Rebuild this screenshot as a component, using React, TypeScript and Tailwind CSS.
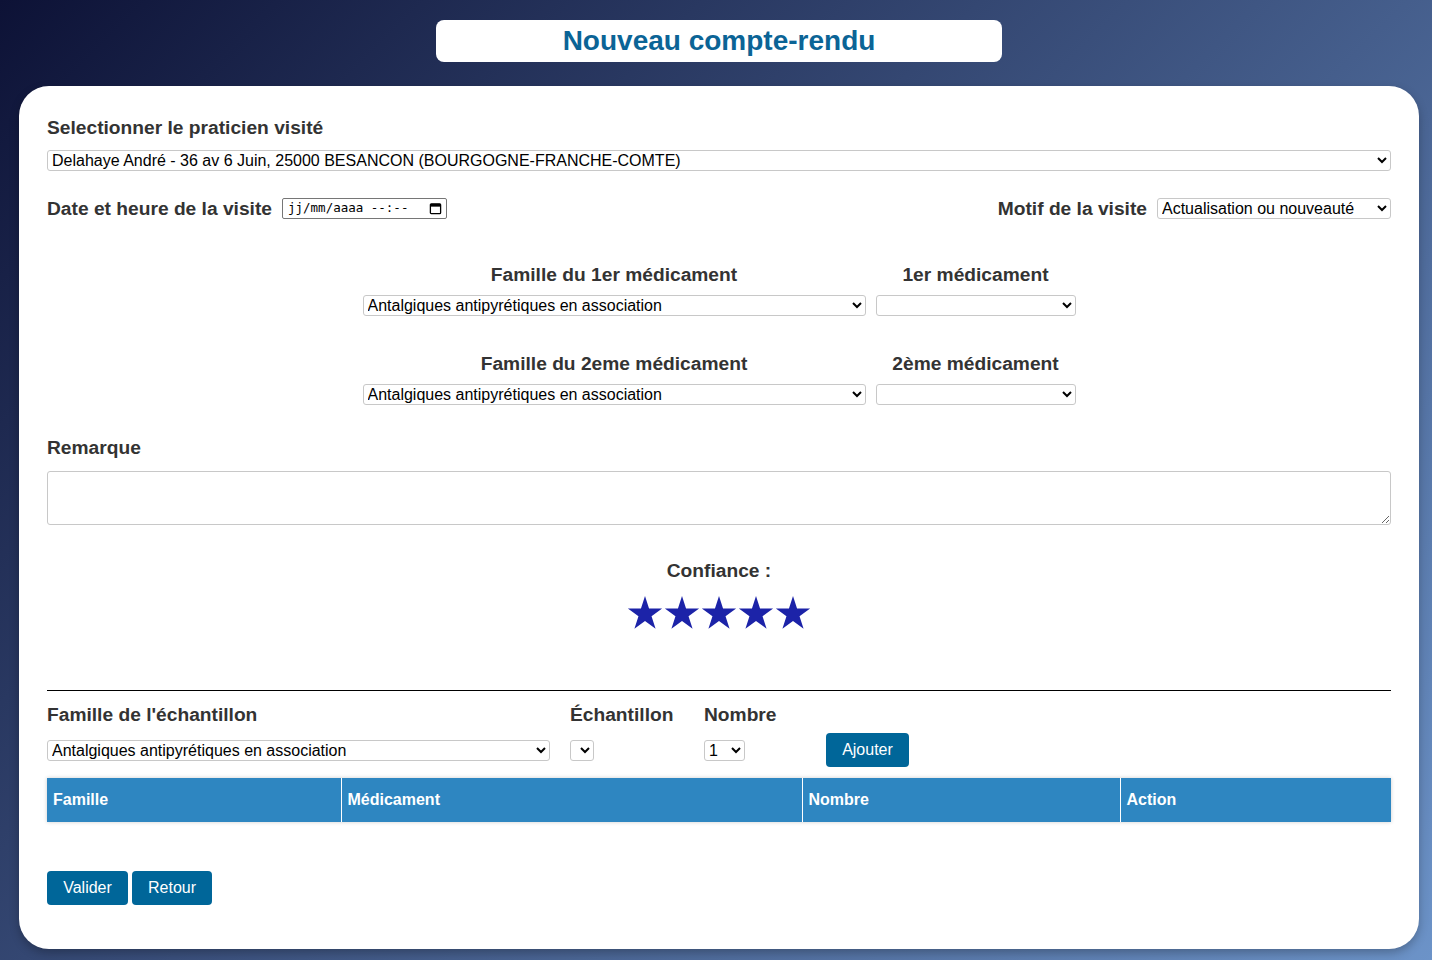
import React from "react";

const STAR = "50,0 61.23,34.55 97.55,34.55 68.16,55.9 79.39,90.45 50,69.1 20.61,90.45 31.84,55.9 2.45,34.55 38.77,34.55";

function Star() {
  return (
    <svg viewBox="0 0 100 91" className="w-[36px] h-[33px]">
      <polygon points={STAR} fill="#1c23a8" />
    </svg>
  );
}

const selCls =
  "block h-[21px] border border-[#c8c8c8] rounded-[3px] bg-white text-[16px] text-black pl-0 pr-[1px] outline-none";

const labelCls = "text-[19.2px] leading-[22px] font-bold text-[#333]";

export default function App() {
  return (
    <div
      className="min-h-screen w-full bg-[linear-gradient(135deg,#0d1236_0%,#6c93c8_100%)] pt-[20px] pb-[11px]"
      style={{ fontFamily: '"Liberation Sans", Arial, sans-serif' }}
    >
      <div className="ml-[19px] w-[1400px]">
        <div className="mx-auto w-[566px] h-[42px] bg-white rounded-[8px] flex items-center justify-center">
          <h1 className="text-[28px] font-bold text-[#0b6496] leading-none">Nouveau compte-rendu</h1>
        </div>

        <div className="mt-[24px] bg-white rounded-[30px] shadow-[0_4px_10px_rgba(0,0,0,0.25)] px-[28px] pt-[31px] pb-[44px]">
          <div className={labelCls}>Selectionner le praticien visité</div>
          <select className={selCls + " w-full mt-[11px]"} defaultValue="a">
            <option value="a">Delahaye André - 36 av 6 Juin, 25000 BESANCON (BOURGOGNE-FRANCHE-COMTE)</option>
          </select>

          <div className="mt-[27px] flex items-center justify-between h-[21px]">
            <div className="flex items-center gap-[10px]">
              <span className={labelCls}>Date et heure de la visite</span>
              <div className="w-[165px] h-[21px] border border-[#767676] rounded-[2px] flex items-center pl-[5px] pr-[4px] justify-between">
                <span className="text-[12.5px] text-black" style={{ fontFamily: '"DejaVu Sans Mono", "Liberation Mono", monospace' }}>
                  jj/mm/aaaa --:--
                </span>
                <svg viewBox="0 0 14 14" className="w-[13px] h-[13px]">
                  <rect x="1.5" y="2" width="11" height="10.5" rx="1" fill="none" stroke="#000" strokeWidth="1.4" />
                  <rect x="1.5" y="2" width="11" height="3" fill="#000" />
                </svg>
              </div>
            </div>
            <div className="flex items-center gap-[10px]">
              <span className={labelCls}>Motif de la visite</span>
              <select className={selCls + " w-[234px]"} defaultValue="a">
                <option value="a">Actualisation ou nouveauté</option>
              </select>
            </div>
          </div>

          <div className="mt-[45px] grid grid-cols-[503px_200px] justify-center gap-x-[10px] gap-y-[9px]">
            <div className={labelCls + " text-center"}>Famille du 1er médicament</div>
            <div className={labelCls + " text-center"}>1er médicament</div>
            <select className={selCls + " w-full"} defaultValue="a">
              <option value="a">Antalgiques antipyrétiques en association</option>
            </select>
            <select className={selCls + " w-full"} defaultValue="">
              <option value=""></option>
            </select>
          </div>

          <div className="mt-[37px] grid grid-cols-[503px_200px] justify-center gap-x-[10px] gap-y-[9px]">
            <div className={labelCls + " text-center"}>Famille du 2eme médicament</div>
            <div className={labelCls + " text-center"}>2ème médicament</div>
            <select className={selCls + " w-full"} defaultValue="a">
              <option value="a">Antalgiques antipyrétiques en association</option>
            </select>
            <select className={selCls + " w-full"} defaultValue="">
              <option value=""></option>
            </select>
          </div>

          <div className={labelCls + " mt-[32px]"}>Remarque</div>
          <textarea className="block mt-[12px] w-full h-[54px] border border-[#c8c8c8] rounded-[3px] bg-white outline-none" />

          <div className={labelCls + " mt-[35px] text-center"}>Confiance :</div>
          <div className="mt-[14px] flex justify-center gap-[1px]">
            <Star />
            <Star />
            <Star />
            <Star />
            <Star />
          </div>

          <div className="mt-[61px] h-px bg-black" />

          <div className="mt-[13px] grid grid-cols-[503px_114px_102px_auto] gap-x-[20px] gap-y-[7px] items-center">
            <div className={labelCls}>Famille de l'échantillon</div>
            <div className={labelCls}>Échantillon</div>
            <div className={labelCls}>Nombre</div>
            <div />
            <select className={selCls + " w-full"} defaultValue="a">
              <option value="a">Antalgiques antipyrétiques en association</option>
            </select>
            <div>
              <select className={selCls + " w-[24px]"} defaultValue="">
                <option value=""></option>
              </select>
            </div>
            <div>
              <select className={selCls + " w-[41px]"} defaultValue="1">
                <option value="1">1</option>
              </select>
            </div>
            <div>
              <button className="block h-[34px] w-[83px] bg-[#006699] text-white text-[16px] rounded-[4px]">Ajouter</button>
            </div>
          </div>

          <table className="mt-[11px] w-full border-collapse shadow-[0_0_4px_rgba(0,0,0,0.2)] table-fixed">
            <thead>
              <tr className="bg-[#2e86c1] text-white h-[44px]">
                <th className="w-[294px] text-left font-bold text-[16px] pl-[6px] border-r border-white">Famille</th>
                <th className="w-[461px] text-left font-bold text-[16px] pl-[6px] border-r border-white">Médicament</th>
                <th className="w-[318px] text-left font-bold text-[16px] pl-[6px] border-r border-white">Nombre</th>
                <th className="text-left font-bold text-[16px] pl-[6px]">Action</th>
              </tr>
            </thead>
          </table>

          <div className="mt-[49px] flex gap-[4px]">
            <button className="h-[34px] w-[81px] bg-[#006699] text-white text-[16px] rounded-[4px]">Valider</button>
            <button className="h-[34px] w-[80px] bg-[#006699] text-white text-[16px] rounded-[4px]">Retour</button>
          </div>
        </div>
      </div>
    </div>
  );
}
